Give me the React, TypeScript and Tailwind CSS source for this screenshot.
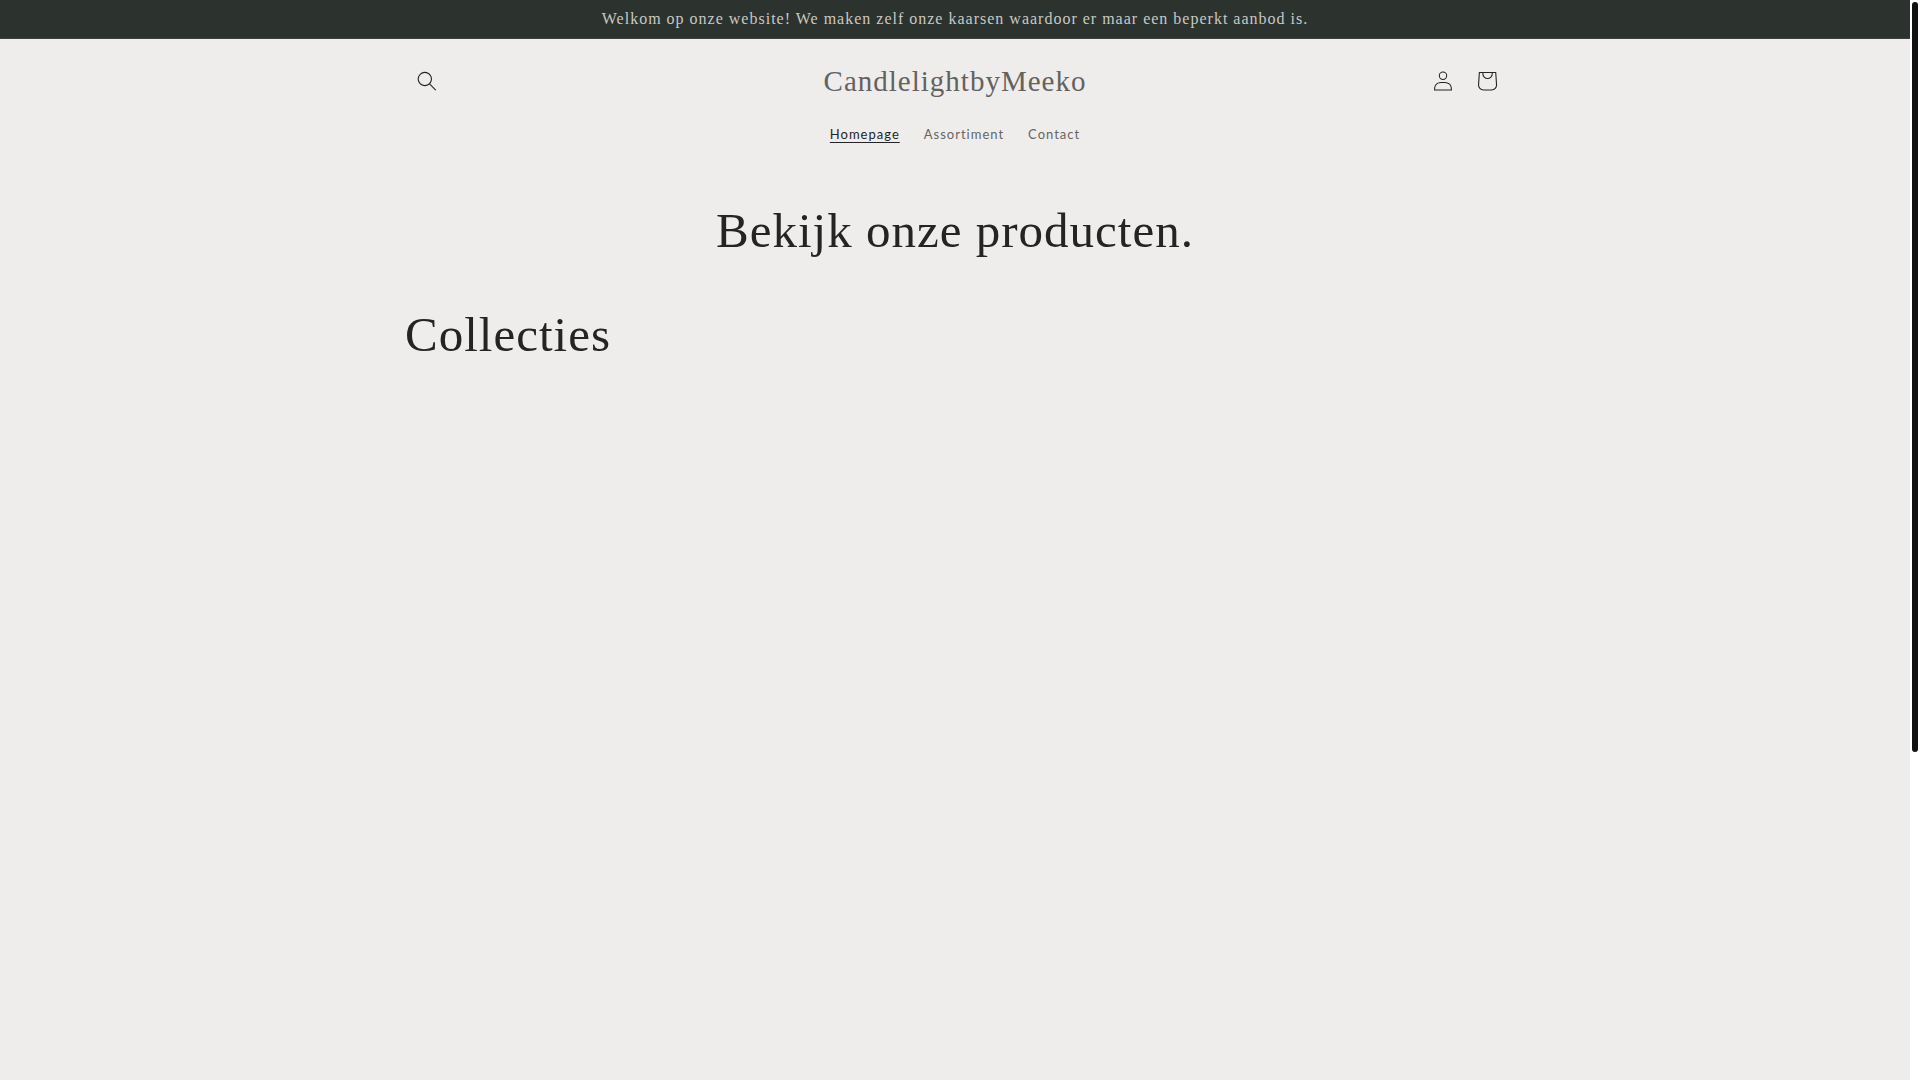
import type { ReactNode } from "react";

const NAV_LINKS = [
  { label: "Homepage", href: "#", active: true },
  { label: "Assortiment", href: "#assortiment", active: false },
  { label: "Contact", href: "#contact", active: false },
];

const SearchIcon = () => (
  <svg className="w-5 h-5" viewBox="0 0 18 19" fill="none" aria-hidden="true">
    <path
      fillRule="evenodd"
      clipRule="evenodd"
      fill="currentColor"
      d="M11.03 11.68A5.784 5.784 0 112.85 3.5a5.784 5.784 0 018.18 8.18zm.26 1.12a6.78 6.78 0 11.72-.7l5.4 5.4a.5.5 0 11-.71.7l-5.41-5.4z"
    />
  </svg>
);

const AccountIcon = () => (
  <svg className="w-5 h-5" viewBox="0 0 18 19" fill="none" aria-hidden="true">
    <path
      fillRule="evenodd"
      clipRule="evenodd"
      fill="currentColor"
      d="M6 4.5a3 3 0 116 0 3 3 0 01-6 0zm3-4a4 4 0 100 8 4 4 0 000-8zm5.58 12.15c1.12.82 1.83 2.24 1.91 4.85H1.51c.08-2.6.79-4.03 1.9-4.85C4.66 11.75 6.5 11.5 9 11.5c2.5 0 4.35.26 5.58 1.15zM9 10.5c-2.5 0-4.65.24-6.17 1.35C1.27 12.98.5 14.93.5 18v.5h17V18c0-3.07-.77-5.02-2.33-6.15-1.52-1.1-3.67-1.35-6.17-1.35z"
    />
  </svg>
);

const CartIcon = () => (
  <svg className="w-11 h-11" viewBox="0 0 40 40" fill="none" aria-hidden="true">
    <path
      fillRule="evenodd"
      fill="currentColor"
      d="M15.75 11.8h-3.16l-.77 11.6a5 5 0 0 0 4.99 5.34h7.38a5 5 0 0 0 4.99-5.33L28.4 11.8zm0 1h-2.22l-.71 10.67a4 4 0 0 0 3.99 4.27h7.38a4 4 0 0 0 4-4.27l-.72-10.67h-2.22v.63a4.75 4.75 0 1 1-9.5 0zm8.5 0h-7.5v.63a3.75 3.75 0 1 0 7.5 0z"
    />
  </svg>
);

const IconLink = ({ href, label, children }: { href: string; label: string; children: ReactNode }) => (
  <a href={href} aria-label={label} className="w-11 h-11 flex items-center justify-center">
    {children}
  </a>
);

const App = () => {
  return (
    <div className="flex h-screen bg-white text-[#242424]">
      <div className="flex-1 min-w-0 overflow-hidden bg-[#eeedeb]">
        {/* Announcement bar */}
        <div className="bg-[#2c332f] border-b border-[#413f3d] px-4 py-2">
          <p className="text-center font-['Liberation_Serif',serif] text-[16px] leading-[22px] tracking-[1px] text-[#c9c8c4]">
            Welkom op onze website! We maken zelf onze kaarsen waardoor er maar een beperkt aanbod is.
          </p>
        </div>

        {/* Header */}
        <header className="max-w-[1200px] mx-auto px-[50px] py-5">
          <div className="grid grid-cols-[1fr_auto_1fr] items-center">
            <button type="button" aria-label="Zoeken" className="w-11 h-11 flex items-center justify-center">
              <SearchIcon />
            </button>
            <a href="#" className="font-['Liberation_Serif',serif] text-[29px] leading-[44px] tracking-[1px] text-[#636261]">
              CandlelightbyMeeko
            </a>
            <div className="flex justify-self-end -mr-1">
              <IconLink href="#account" label="Inloggen">
                <AccountIcon />
              </IconLink>
              <IconLink href="#cart" label="Winkelwagen">
                <CartIcon />
              </IconLink>
            </div>
          </div>
          <nav className="mt-5 flex justify-center gap-6">
            {NAV_LINKS.map((link) => (
              <a
                key={link.label}
                href={link.href}
                className={`font-[Lato,sans-serif] text-[13px] leading-[22px] tracking-[1px] ${
                  link.active ? "text-[#242424] underline underline-offset-3" : "text-[#666564]"
                }`}
              >
                {link.label}
              </a>
            ))}
          </nav>
        </header>

        <main className="max-w-[1200px] mx-auto px-[50px] pt-8 font-['Liberation_Serif',serif] text-[49px] leading-[68px] tracking-[1px]">
          <h1 className="text-center">Bekijk onze producten.</h1>
          <h2 className="mt-9">Collecties</h2>
        </main>
      </div>

      {/* Scroll track */}
      <div className="w-2.5 shrink-0 p-0.5">
        <div className="h-[69.7%] rounded-full bg-[#111111]" />
      </div>
    </div>
  );
};

export default App;
